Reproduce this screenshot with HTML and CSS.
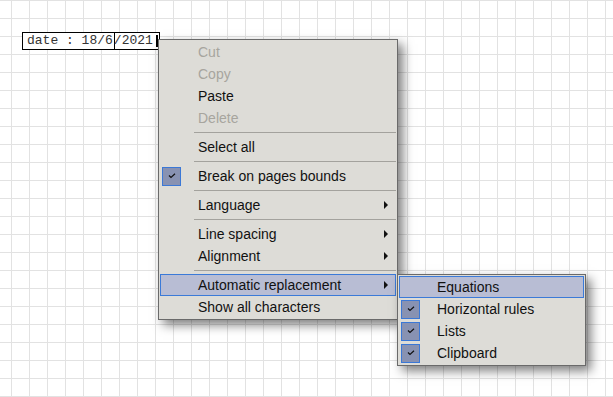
FILE: index.html
```html
<!DOCTYPE html>
<html>
<head>
<meta charset="utf-8">
<link rel="stylesheet" href="styles.css">
</head>
<body>
<div class="canvas">
  <div class="textbox">
    <span class="txt">date : 18/6</span><span class="caret"></span><span class="txt">/2021</span><span class="cursor"></span>
  </div>

  <div class="menu main-menu">
    <div class="item disabled"><span class="icon"></span><span class="label">Cut</span></div>
    <div class="item disabled"><span class="icon"></span><span class="label">Copy</span></div>
    <div class="item"><span class="icon"></span><span class="label">Paste</span></div>
    <div class="item disabled"><span class="icon"></span><span class="label">Delete</span></div>
    <div class="sep"></div>
    <div class="item"><span class="icon"></span><span class="label">Select all</span></div>
    <div class="sep"></div>
    <div class="item"><span class="icon check"><svg width="8" height="6" viewBox="0 0 8 6"><path d="M1 2.5 L3 4.5 L7 0.8" fill="none" stroke="#111" stroke-width="1.2"/></svg></span><span class="label">Break on pages bounds</span></div>
    <div class="sep"></div>
    <div class="item"><span class="icon"></span><span class="label">Language</span><span class="arrow"></span></div>
    <div class="sep"></div>
    <div class="item"><span class="icon"></span><span class="label">Line spacing</span><span class="arrow"></span></div>
    <div class="item"><span class="icon"></span><span class="label">Alignment</span><span class="arrow"></span></div>
    <div class="sep"></div>
    <div class="item active"><span class="icon"></span><span class="label">Automatic replacement</span><span class="arrow"></span></div>
    <div class="item"><span class="icon"></span><span class="label">Show all characters</span></div>
  </div>

  <div class="menu sub-menu">
    <div class="item active"><span class="icon"></span><span class="label">Equations</span></div>
    <div class="item"><span class="icon check"><svg width="8" height="6" viewBox="0 0 8 6"><path d="M1 2.5 L3 4.5 L7 0.8" fill="none" stroke="#111" stroke-width="1.2"/></svg></span><span class="label">Horizontal rules</span></div>
    <div class="item"><span class="icon check"><svg width="8" height="6" viewBox="0 0 8 6"><path d="M1 2.5 L3 4.5 L7 0.8" fill="none" stroke="#111" stroke-width="1.2"/></svg></span><span class="label">Lists</span></div>
    <div class="item"><span class="icon check"><svg width="8" height="6" viewBox="0 0 8 6"><path d="M1 2.5 L3 4.5 L7 0.8" fill="none" stroke="#111" stroke-width="1.2"/></svg></span><span class="label">Clipboard</span></div>
  </div>
</div>
</body>
</html>
```

FILE: styles.css
```css
html, body {
  margin: 0;
  padding: 0;
}
body {
  width: 613px;
  height: 397px;
  overflow: hidden;
  background-color: #ffffff;
  background-image:
    linear-gradient(to right, #e2e2e2 1px, transparent 1px),
    linear-gradient(to bottom, #e2e2e2 1px, transparent 1px);
  background-size: 18px 18px;
  background-position: 11px 0;
  font-family: "Liberation Sans", Arial, sans-serif;
}
.canvas {
  position: relative;
  width: 613px;
  height: 397px;
  padding: 30px 0 0 22px;
  box-sizing: border-box;
}
.textbox {
  display: inline-flex;
  align-items: center;
  box-sizing: border-box;
  width: 138px;
  height: 18px;
  border: 1px solid #000;
  background: #fff;
  padding-left: 4px;
  font-family: "Liberation Mono", "Courier New", monospace;
  font-size: 13px;
  color: #333;
}
.txt {
  white-space: pre;
  line-height: 16px;
}
.caret {
  align-self: stretch;
  width: 0;
  border-left: 1px solid #000;
  margin-left: 1px;
  margin-right: -1px;
}
.cursor {
  width: 2px;
  height: 12px;
  background: #000;
  margin-left: 3px;
}
.menu {
  position: absolute;
  box-sizing: border-box;
  background: #dddcd7;
  border: 1px solid #6a6a6a;
  padding: 1px;
  box-shadow: 5px 5px 10px rgba(0, 0, 0, 0.5);
  font-size: 14px;
  color: #111;
}
.main-menu {
  left: 158px;
  top: 39px;
  width: 240px;
  height: 281px;
}
.sub-menu {
  left: 397px;
  top: 274px;
  width: 189px;
  height: 92px;
}
.item {
  display: flex;
  align-items: center;
  box-sizing: border-box;
  height: 22px;
  border: 1px solid transparent;
  padding-left: 1px;
  padding-right: 7px;
}
.item.active {
  background: #b8bdd4;
  border-color: #3b7ad8;
}
.item.disabled {
  color: #a7a59e;
}
.icon {
  flex: none;
  width: 19px;
  height: 19px;
  box-sizing: border-box;
  margin-right: 17px;
  display: flex;
  align-items: center;
  justify-content: center;
}
.icon.check {
  background: #8892b2;
  border: 1px solid #3b78d6;
}
.label {
  flex: 1;
  white-space: nowrap;
  line-height: 16px;
}
.arrow {
  width: 0;
  height: 0;
  border-top: 4px solid transparent;
  border-bottom: 4px solid transparent;
  border-left: 4px solid #111;
}
.sep {
  height: 7px;
  margin-left: 34px;
  position: relative;
}
.sep::before {
  content: "";
  position: absolute;
  left: 0;
  right: 0;
  top: 3px;
  height: 1px;
  background: #a3a29d;
}
```
